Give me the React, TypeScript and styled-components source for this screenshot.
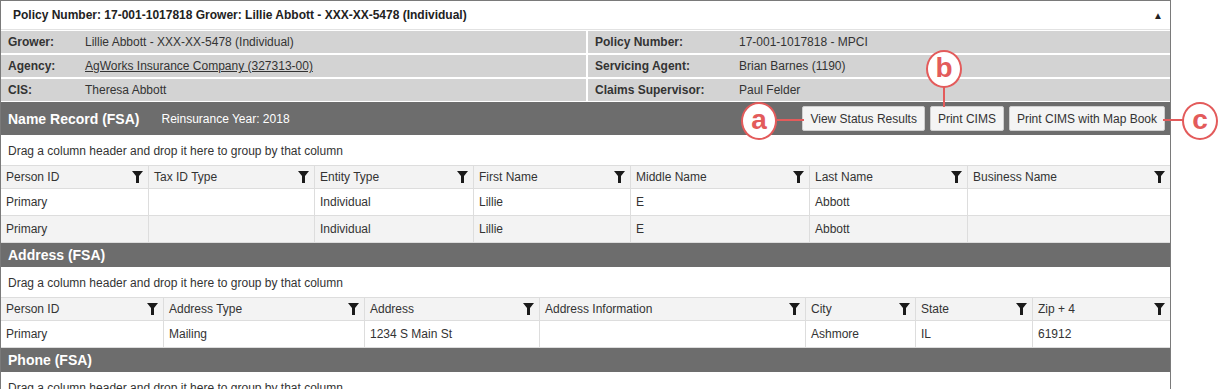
import styled, { createGlobalStyle } from "styled-components";

const GlobalStyle = createGlobalStyle`
  html, body {
    margin: 0;
    padding: 0;
    background: #ffffff;
  }
  body {
    font-family: "Liberation Sans", Arial, sans-serif;
    font-size: 12px;
    color: #333333;
  }
`;

const Page = styled.div`
  position: relative;
  width: 1230px;
  height: 389px;
  overflow: hidden;
`;

const Panel = styled.div`
  width: 1169px;
  border: 1px solid #7a7a7a;
  background: #ffffff;
`;

const TopHeader = styled.div`
  height: 28px;
  display: flex;
  align-items: center;
  justify-content: space-between;
  padding: 0 7px 0 12px;
  border-bottom: 1px solid #e2e2e2;
  font-weight: bold;
  font-size: 12px;
  color: #222222;
`;

const Caret = styled.span`
  font-size: 10px;
  color: #222222;
`;

const InfoGrid = styled.div`
  display: grid;
  grid-template-columns: 585px 1fr;
  gap: 2px 2px;
  padding: 1px 0 1px 0;
  background: #ffffff;
`;

const InfoCell = styled.div<{ $labelWidth: number }>`
  height: 22px;
  display: flex;
  align-items: center;
  background: #d3d3d3;
  padding-left: 7px;

  & > span:first-child {
    width: ${(p) => p.$labelWidth}px;
    font-weight: bold;
    color: #333333;
  }
`;

const Value = styled.span<{ $link?: boolean }>`
  color: #333333;
  text-decoration: ${(p) => (p.$link ? "underline" : "none")};
`;

const SectionBar = styled.div<{ $tall?: boolean }>`
  height: ${(p) => (p.$tall ? 33 : 24)}px;
  display: flex;
  align-items: center;
  background: #6d6d6d;
  color: #ffffff;
  padding: 0 5px 0 7px;
`;

const SectionTitle = styled.span`
  font-size: 14px;
  font-weight: bold;
`;

const SubTitle = styled.span`
  font-size: 12px;
  margin-left: 22px;
`;

const ButtonGroup = styled.div`
  margin-left: auto;
  display: flex;
  gap: 5px;
`;

const Button = styled.button`
  height: 25px;
  padding: 0 7px;
  background: #f4f4f4;
  border: 1px solid #cfcfcf;
  border-radius: 2px;
  font-family: "Liberation Sans", Arial, sans-serif;
  font-size: 12px;
  color: #333333;
`;

const DropZone = styled.div`
  height: 31px;
  display: flex;
  align-items: center;
  padding: 2px 0 0 7px;
  box-sizing: border-box;
  border-bottom: 1px solid #dddddd;
  color: #333333;
`;

const GridRow = styled.div<{ $cols: string; $head?: boolean; $alt?: boolean }>`
  display: grid;
  grid-template-columns: ${(p) => p.$cols};
  height: ${(p) => (p.$head ? 22 : 26)}px;
  background: ${(p) => (p.$head || p.$alt ? "#f3f3f3" : "#ffffff")};
  border-bottom: 1px solid #dddddd;
`;

const Cell = styled.div`
  display: flex;
  align-items: center;
  justify-content: space-between;
  padding: 0 5px 0 5px;
  border-right: 1px solid #dddddd;
  white-space: nowrap;
  overflow: hidden;

  &:last-child {
    border-right: none;
  }
`;

const Callout = styled.div<{ $x: number; $y: number }>`
  position: absolute;
  left: ${(p) => p.$x - 18}px;
  top: ${(p) => p.$y - 18}px;
  width: 32px;
  height: 32px;
  border: 2px solid #e35b5b;
  border-radius: 50%;
  background: #ffffff;
  display: flex;
  align-items: center;
  justify-content: center;
  color: #e35b5b;
  font-weight: bold;
  font-size: 28px;
  line-height: 1;
  padding-bottom: 2px;
  box-sizing: content-box;
`;

const Leader = styled.div`
  position: absolute;
  background: #e35b5b;
`;

const FilterIcon = () => (
  <svg width="11" height="12" viewBox="0 0 11 12">
    <polygon points="0,0 11,0 7,5 7,12 4,12 4,5" fill="#1a1a1a" />
  </svg>
);

const nameCols = "148px 166px 159px 157px 179px 158px 1fr";
const nameHeads = [
  "Person ID",
  "Tax ID Type",
  "Entity Type",
  "First Name",
  "Middle Name",
  "Last Name",
  "Business Name",
];
const nameRows = [
  ["Primary", "", "Individual", "Lillie", "E", "Abbott", ""],
  ["Primary", "", "Individual", "Lillie", "E", "Abbott", ""],
];

const addrCols = "163px 201px 175px 266px 110px 117px 1fr";
const addrHeads = [
  "Person ID",
  "Address Type",
  "Address",
  "Address Information",
  "City",
  "State",
  "Zip + 4",
];
const addrRows = [["Primary", "Mailing", "1234 S Main St", "", "Ashmore", "IL", "61912"]];

function DataGrid({ cols, heads, rows }: { cols: string; heads: string[]; rows: string[][] }) {
  return (
    <>
      <DropZone>Drag a column header and drop it here to group by that column</DropZone>
      <GridRow $cols={cols} $head>
        {heads.map((h) => (
          <Cell key={h}>
            <span>{h}</span>
            <FilterIcon />
          </Cell>
        ))}
      </GridRow>
      {rows.map((r, i) => (
        <GridRow key={i} $cols={cols} $alt={i % 2 === 1}>
          {r.map((c, j) => (
            <Cell key={j}>{c}</Cell>
          ))}
        </GridRow>
      ))}
    </>
  );
}

export default function App() {
  return (
    <>
      <GlobalStyle />
      <Page>
        <Panel>
          <TopHeader>
            <span>Policy Number: 17-001-1017818 Grower: Lillie Abbott - XXX-XX-5478 (Individual)</span>
            <Caret>▲</Caret>
          </TopHeader>
          <InfoGrid>
            <InfoCell $labelWidth={77}>
              <span>Grower:</span>
              <Value>Lillie Abbott - XXX-XX-5478 (Individual)</Value>
            </InfoCell>
            <InfoCell $labelWidth={144}>
              <span>Policy Number:</span>
              <Value>17-001-1017818 - MPCI</Value>
            </InfoCell>
            <InfoCell $labelWidth={77}>
              <span>Agency:</span>
              <Value $link>AgWorks Insurance Company (327313-00)</Value>
            </InfoCell>
            <InfoCell $labelWidth={144}>
              <span>Servicing Agent:</span>
              <Value>Brian Barnes (1190)</Value>
            </InfoCell>
            <InfoCell $labelWidth={77}>
              <span>CIS:</span>
              <Value>Theresa Abbott</Value>
            </InfoCell>
            <InfoCell $labelWidth={144}>
              <span>Claims Supervisor:</span>
              <Value>Paul Felder</Value>
            </InfoCell>
          </InfoGrid>

          <SectionBar $tall>
            <SectionTitle>Name Record (FSA)</SectionTitle>
            <SubTitle>Reinsurance Year: 2018</SubTitle>
            <ButtonGroup>
              <Button>View Status Results</Button>
              <Button>Print CIMS</Button>
              <Button>Print CIMS with Map Book</Button>
            </ButtonGroup>
          </SectionBar>
          <DataGrid cols={nameCols} heads={nameHeads} rows={nameRows} />

          <SectionBar>
            <SectionTitle>Address (FSA)</SectionTitle>
          </SectionBar>
          <DataGrid cols={addrCols} heads={addrHeads} rows={addrRows} />

          <SectionBar>
            <SectionTitle>Phone (FSA)</SectionTitle>
          </SectionBar>
          <DropZone>Drag a column header and drop it here to group by that column</DropZone>
        </Panel>

        <Leader style={{ left: 777, top: 119, width: 27, height: 2 }} />
        <Leader style={{ left: 943, top: 86, width: 2, height: 21 }} />
        <Leader style={{ left: 1163, top: 119, width: 20, height: 2 }} />
        <Callout $x={759} $y={120}>a</Callout>
        <Callout $x={944} $y={68}>b</Callout>
        <Callout $x={1200} $y={120}>c</Callout>
      </Page>
    </>
  );
}
